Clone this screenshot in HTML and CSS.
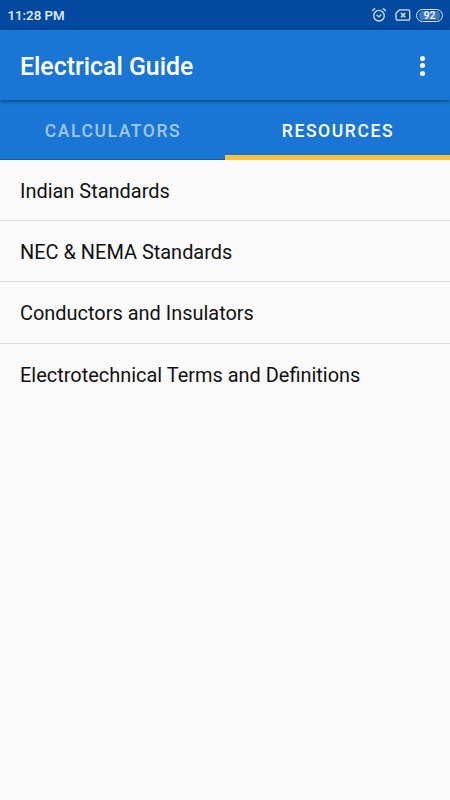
FILE: index.html
```html
<!DOCTYPE html>
<html lang="en">
<head>
  <meta charset="UTF-8">
  <title>Electrical Guide</title>
  <link rel="stylesheet" href="styles.css">
</head>
<body>
  <div class="status-bar">
    <span class="time">11:28 PM</span>
    <div class="status-icons">
      <svg class="alarm" width="16" height="16" viewBox="0 0 16 16">
        <circle cx="8" cy="8.7" r="5.3"/>
        <path d="M5.600 7.800L7.800 9.900L10.400 7.500M1.300 4.300Q2 2.300 4.300 1.700M14.700 4.300Q14 2.300 11.700 1.700"/>
      </svg>
      <svg class="sim" width="16" height="12" viewBox="0 0 16 12">
        <path d="M4.500 .8h8.700a1.500 1.500 0 0 1 1.500 1.500v7.400a1.500 1.500 0 0 1-1.500 1.500H2.500A1.500 1.500 0 0 1 1 9.700V4.300z"/>
        <path class="cross" d="M6 4l4.200 4.200M10.200 4L6 8.200"/>
      </svg>
      <div class="battery"><span>92</span></div>
    </div>
  </div>

  <header class="header">
    <h1>Electrical Guide</h1>
    <button class="menu" aria-label="More options">
      <i></i><i></i><i></i>
    </button>
  </header>

  <nav class="tabs">
    <a class="tab">CALCULATORS</a>
    <a class="tab active">RESOURCES</a>
  </nav>

  <ul class="list">
    <li>Indian Standards</li>
    <li>NEC &amp; NEMA Standards</li>
    <li>Conductors and Insulators</li>
    <li>Electrotechnical Terms and Definitions</li>
  </ul>
</body>
</html>
```
FILE: styles.css
```css
* {
  box-sizing: border-box;
}

body {
  margin: 0;
  height: 800px;
  background: #fafafa;
  font-family: Roboto, sans-serif;
  overflow: hidden;
}

.status-bar {
  height: 30px;
  padding: 0 7px 0 7.5px;
  display: flex;
  align-items: center;
  justify-content: space-between;
  background: #0149a1;
  color: #e8f0fa;
}

.time {
  font-size: 13.3px;
  font-weight: 500;
}

.status-icons {
  display: flex;
  align-items: center;
}

.status-icons svg {
  fill: none;
  stroke: #dce7f4;
  stroke-width: 1.3;
}

.status-icons .cross {
  stroke-width: 1.6;
}

.alarm {
  margin-right: 8px;
}

.sim {
  margin-right: 5px;
}

.battery {
  width: 27px;
  height: 13px;
  border: 1px solid #dce7f4;
  border-radius: 7px;
  background: linear-gradient(#3f78be, #3f78be) content-box;
  padding: 1px 2px;
  display: flex;
  align-items: center;
  justify-content: center;
  font-size: 10.5px;
  font-weight: 700;
}

.header {
  height: 70px;
  padding: 1px 17px 0 20px;
  display: flex;
  align-items: center;
  justify-content: space-between;
  background: #1976d4;
  box-shadow: 0 1px 4px rgba(0, 0, 0, 0.5);
  position: relative;
}

h1 {
  margin: 0;
  padding-top: 1px;
  color: #fff;
  font-size: 24.85px;
  font-weight: 500;
}

.menu {
  width: 21px;
  padding: 0;
  border: none;
  background: none;
  display: flex;
  flex-direction: column;
  align-items: center;
  gap: 2.5px;
}

.menu i {
  width: 5px;
  height: 5px;
  border-radius: 50%;
  background: #fff;
}

.tabs {
  height: 60px;
  display: flex;
  background: #1976d4;
}

.tab {
  flex: 1;
  display: flex;
  align-items: center;
  justify-content: center;
  padding: 2px 0 0 1px;
  border-bottom: 1px solid #0d5cb8;
  color: #a3c8ee;
  font-size: 17.5px;
  font-weight: 500;
  letter-spacing: 1.6px;
}

.tab.active {
  border-bottom: 5px solid #fdc03c;
  padding-top: 6px;
  color: #fff;
}

.list {
  margin: 0;
  padding: 0;
  list-style: none;
}

.list li {
  height: 61.2px;
  padding: 2px 0 0 20px;
  display: flex;
  align-items: center;
  border-bottom: 1px solid #d9d9d9;
  color: #111;
  font-size: 19.95px;
}

.list li:last-child {
  border-bottom: none;
}
```
